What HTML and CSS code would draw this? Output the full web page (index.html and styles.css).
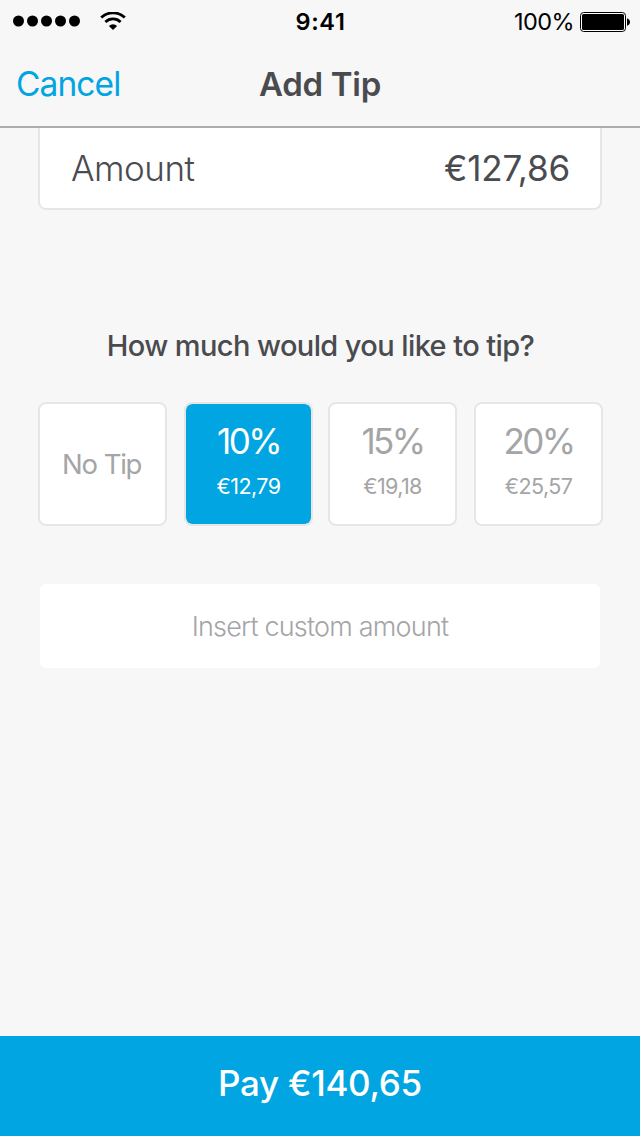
FILE: index.html
```html
<!DOCTYPE html>
<html lang="en">
<head>
<meta charset="utf-8">
<title>Add Tip</title>
<link rel="stylesheet" href="styles.css">
</head>
<body>
<div class="screen">
  <header class="header">
    <div class="status">
      <div class="status-left">
        <svg class="signal" width="68" height="12" viewBox="0 0 68 12"><circle cx="5.5" cy="6" r="5.5"/><circle cx="19.5" cy="6" r="5.5"/><circle cx="33.5" cy="6" r="5.5"/><circle cx="47.5" cy="6" r="5.5"/><circle cx="61.5" cy="6" r="5.5"/></svg>
        <svg class="wifi" width="26" height="18" viewBox="0 0 26 18"><path d="M1.2 5.6a17 17 0 0 1 23.6 0M5.4 10a10.9 10.9 0 0 1 15.2 0" fill="none" stroke="#000" stroke-width="2.8"/><path d="M8.9 13.9a6.2 6.2 0 0 1 8.2 0L13 18z"/></svg>
      </div>
      <div class="clock">9:41</div>
      <div class="status-right">
        <span class="percent">100%</span>
        <svg class="battery" width="50" height="20" viewBox="0 0 50 20"><rect x=".5" y=".5" width="45" height="19" rx="3.2" fill="#fff" stroke="#000"/><rect x="2" y="2" width="42" height="16" rx="1.6"/><path d="M47 6.2c4 1.4 4 6.2 0 7.6z"/></svg>
      </div>
    </div>
    <nav class="nav">
      <a class="cancel">Cancel</a>
      <h1 class="title">Add Tip</h1>
    </nav>
  </header>
  <main class="content">
    <section class="card">
      <span class="label">Amount</span>
      <span class="value">€127,86</span>
    </section>
    <h2 class="question">How much would you like to tip?</h2>
    <div class="tips">
      <button class="tip"><span class="none">No Tip</span></button>
      <button class="tip selected"><span class="rate">10%</span><span class="sum">€12,79</span></button>
      <button class="tip"><span class="rate">15%</span><span class="sum">€19,18</span></button>
      <button class="tip"><span class="rate">20%</span><span class="sum">€25,57</span></button>
    </div>
    <div class="custom"><span>Insert custom amount</span></div>
  </main>
  <button class="pay"><span>Pay €140,65</span></button>
</div>
</body>
</html>
```
FILE: styles.css
```css
* { box-sizing: border-box; }
body { margin: 0; font-family: Inter, "Liberation Sans", sans-serif; background: #f7f7f7; }
button { font: inherit; border: 0; margin: 0; padding: 0; }
.screen { width: 640px; height: 1136px; display: flex; flex-direction: column; color: #4a4b4f; white-space: nowrap; overflow: hidden; }
.header { height: 128px; flex: none; border-bottom: 2px solid #adadad; }
.status { height: 42px; padding: 0 10px 0 13px; display: grid; grid-template-columns: 1fr auto 1fr; align-items: center; color: #000; }
.status-left { display: flex; align-items: center; gap: 19px; }
.status svg { display: block; }
.clock { font-size: 23.5px; font-weight: 600; letter-spacing: .7px; margin-right: 2px; }
.status-right { display: flex; align-items: center; justify-content: flex-end; gap: 6px; }
.battery { margin-top: 2px; }
.percent { font-size: 23.5px; letter-spacing: -.6px; }
.nav { height: 84px; display: grid; grid-template-columns: 1fr auto 1fr; align-items: center; padding: 0 16px; }
.cancel { color: #00a5e2; font-size: 33.5px; letter-spacing: -.9px; }
.title { margin: 0; font-size: 33px; font-weight: 600; letter-spacing: -.3px; }
.content { flex: 1; padding: 0 37px 0 38px; }
.card { width: 564px; height: 82px; padding: 0 30px 0 31px; display: flex; justify-content: space-between; align-items: center; background: #fff; border: 2px solid #e6e6e6; border-top: 0; border-radius: 0 0 8px 8px; font-size: 35px; }
.label { font-weight: 300; letter-spacing: -.5px; }
.value { letter-spacing: -.15px; }
.question { margin: 116px 0 0; height: 40px; line-height: 40px; text-align: center; font-size: 29px; font-weight: 500; letter-spacing: -.6px; }
.tips { margin-top: 36px; display: grid; grid-template-columns: 146px 144px 146px 129px; }
.tip { width: 129px; height: 124px; padding-bottom: 8px; display: flex; flex-direction: column; align-items: center; justify-content: center; background: #fff; border: 2px solid #e6e6e6; border-radius: 8px; color: #a4a5a6; }
.selected { background: #00a5e2; background-clip: padding-box; color: #fff; }
.none { font-size: 27.5px; letter-spacing: -1.4px; word-spacing: 1px; padding: 8px 2px 0 0; }
.rate { font-size: 35px; line-height: 44px; letter-spacing: -2.6px; }
.sum { font-size: 21.5px; line-height: 30px; margin-top: 8px; letter-spacing: -.6px; }
.custom { width: 560px; height: 84px; margin: 58px 0 0 2px; display: flex; align-items: center; justify-content: center; background: #fff; border-radius: 6px; color: #a4a5a6; font-size: 27px; font-weight: 300; letter-spacing: -.8px; }
.pay { flex: none; height: 100px; padding-bottom: 6px; background: #00a5e2; color: #fff; font-size: 35px; font-weight: 500; letter-spacing: -.3px; }
```
